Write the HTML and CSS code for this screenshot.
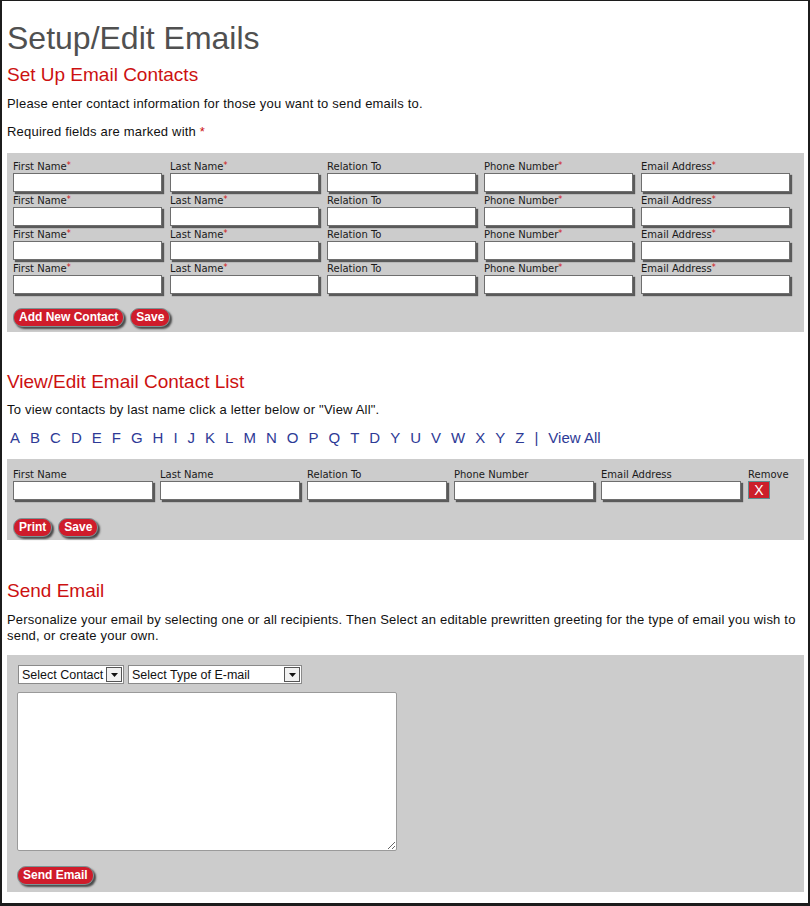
FILE: index.html
```html
<!DOCTYPE html>
<html lang="en">
<head>
<meta charset="utf-8">
<title>Setup/Edit Emails</title>
<link rel="stylesheet" href="styles.css">
</head>
<body>
<div class="page">
  <h1 class="title">Setup/Edit Emails</h1>

  <section class="section">
    <h2 class="heading">Set Up Email Contacts</h2>
    <p class="text">Please enter contact information for those you want to send emails to.</p>
    <p class="text note">Required fields are marked with <span class="req">*</span></p>
    <form class="panel panel-setup">
      <div class="contact-grid">
        <label class="field"><span class="field-label">First Name<span class="req-sm">*</span></span><input class="input" type="text"></label>
        <label class="field"><span class="field-label">Last Name<span class="req-sm">*</span></span><input class="input" type="text"></label>
        <label class="field"><span class="field-label">Relation To</span><input class="input" type="text"></label>
        <label class="field"><span class="field-label">Phone Number<span class="req-sm">*</span></span><input class="input" type="text"></label>
        <label class="field"><span class="field-label">Email Address<span class="req-sm">*</span></span><input class="input" type="text"></label>

        <label class="field"><span class="field-label">First Name<span class="req-sm">*</span></span><input class="input" type="text"></label>
        <label class="field"><span class="field-label">Last Name<span class="req-sm">*</span></span><input class="input" type="text"></label>
        <label class="field"><span class="field-label">Relation To</span><input class="input" type="text"></label>
        <label class="field"><span class="field-label">Phone Number<span class="req-sm">*</span></span><input class="input" type="text"></label>
        <label class="field"><span class="field-label">Email Address<span class="req-sm">*</span></span><input class="input" type="text"></label>

        <label class="field"><span class="field-label">First Name<span class="req-sm">*</span></span><input class="input" type="text"></label>
        <label class="field"><span class="field-label">Last Name<span class="req-sm">*</span></span><input class="input" type="text"></label>
        <label class="field"><span class="field-label">Relation To</span><input class="input" type="text"></label>
        <label class="field"><span class="field-label">Phone Number<span class="req-sm">*</span></span><input class="input" type="text"></label>
        <label class="field"><span class="field-label">Email Address<span class="req-sm">*</span></span><input class="input" type="text"></label>

        <label class="field"><span class="field-label">First Name<span class="req-sm">*</span></span><input class="input" type="text"></label>
        <label class="field"><span class="field-label">Last Name<span class="req-sm">*</span></span><input class="input" type="text"></label>
        <label class="field"><span class="field-label">Relation To</span><input class="input" type="text"></label>
        <label class="field"><span class="field-label">Phone Number<span class="req-sm">*</span></span><input class="input" type="text"></label>
        <label class="field"><span class="field-label">Email Address<span class="req-sm">*</span></span><input class="input" type="text"></label>
      </div>
      <div class="actions actions-setup">
        <button class="btn" type="button">Add New Contact</button>
        <button class="btn" type="button">Save</button>
      </div>
    </form>
  </section>

  <section class="section">
    <h2 class="heading heading-gap">View/Edit Email Contact List</h2>
    <p class="text text-list">To view contacts by last name click a letter below or "View All".</p>
    <nav class="alpha">
      <a href="#">A</a><a href="#">B</a><a href="#">C</a><a href="#">D</a><a href="#">E</a><a href="#">F</a><a href="#">G</a><a href="#">H</a><a href="#">I</a><a href="#">J</a><a href="#">K</a><a href="#">L</a><a href="#">M</a><a href="#">N</a><a href="#">O</a><a href="#">P</a><a href="#">Q</a><a href="#">T</a><a href="#">D</a><a href="#">Y</a><a href="#">U</a><a href="#">V</a><a href="#">W</a><a href="#">X</a><a href="#">Y</a><a href="#">Z</a><span class="sep">|</span><a href="#">View All</a>
    </nav>
    <form class="panel panel-list">
      <div class="list-grid">
        <label class="field"><span class="field-label">First Name</span><input class="input" type="text"></label>
        <label class="field"><span class="field-label">Last Name</span><input class="input" type="text"></label>
        <label class="field"><span class="field-label">Relation To</span><input class="input" type="text"></label>
        <label class="field"><span class="field-label">Phone Number</span><input class="input" type="text"></label>
        <label class="field"><span class="field-label">Email Address</span><input class="input" type="text"></label>
        <div class="field"><span class="field-label">Remove</span><button class="remove-btn" type="button">X</button></div>
      </div>
      <div class="actions actions-list">
        <button class="btn" type="button">Print</button>
        <button class="btn" type="button">Save</button>
      </div>
    </form>
  </section>

  <section class="section">
    <h2 class="heading heading-gap2">Send Email</h2>
    <p class="text text-send">Personalize your email by selecting one or all recipients. Then Select an editable prewritten greeting for the type of email you wish to send, or create your own.</p>
    <form class="panel panel-send">
      <div class="selects">
        <div class="select select-contact" role="combobox" aria-expanded="false">
          <span class="select-text">Select Contact</span>
          <span class="select-arrow"><svg width="7" height="4" viewBox="0 0 7 4"><path d="M0 0H7L3.5 4Z" fill="#111"/></svg></span>
        </div>
        <div class="select select-type" role="combobox" aria-expanded="false">
          <span class="select-text">Select Type of E-mail</span>
          <span class="select-arrow"><svg width="7" height="4" viewBox="0 0 7 4"><path d="M0 0H7L3.5 4Z" fill="#111"/></svg></span>
        </div>
      </div>
      <textarea class="message"></textarea>
      <div class="actions actions-send">
        <button class="btn" type="button">Send Email</button>
      </div>
    </form>
  </section>
</div>
</body>
</html>
```

FILE: styles.css
```css
* {
  box-sizing: border-box;
}

html,
body {
  margin: 0;
  padding: 0;
  background: #ffffff;
}

body {
  font-family: "Liberation Sans", Arial, sans-serif;
  color: #111111;
}

.page {
  height: 906px;
  border-style: solid;
  border-color: #1c1c1c;
  border-width: 1px 2px 3px 2px;
  padding: 0 4px 0 5px;
  overflow: hidden;
}

.title {
  font-size: 32px;
  line-height: 37px;
  font-weight: normal;
  color: #505050;
  margin: 19px 0 7px;
}

.heading {
  font-size: 19px;
  line-height: 22px;
  font-weight: normal;
  color: #cc1111;
  margin: 0 0 10px;
}

.heading-gap {
  margin-top: 39px;
  margin-bottom: 9px;
}

.heading-gap2 {
  margin-top: 40px;
}

.text {
  font-size: 13px;
  line-height: 16px;
  letter-spacing: 0.2px;
  margin: 0 0 12px;
}

.note {
  margin-bottom: 13px;
}

.text-list {
  margin-bottom: 11px;
}

.text-send {
  margin-bottom: 11px;
}

.req {
  color: #cc1111;
}

.panel {
  background: #cccccc;
  margin: 0;
}

/* Set up panel */
.panel-setup {
  padding: 8px 6px 5px;
}

.contact-grid {
  display: grid;
  grid-template-columns: repeat(5, 149px);
  column-gap: 8px;
  row-gap: 3px;
}

.field {
  display: flex;
  flex-direction: column;
  align-items: flex-start;
}

.field-label {
  font-family: "DejaVu Sans", Verdana, sans-serif;
  font-size: 10px;
  line-height: 12px;
  height: 12px;
  color: #1a1a1a;
  white-space: nowrap;
}

.req-sm {
  color: #d01010;
  font-size: 8px;
  line-height: 8px;
  vertical-align: top;
  position: relative;
  top: 1px;
}

.input {
  display: block;
  width: 100%;
  height: 19px;
  margin: 0;
  padding: 0 3px;
  border: 1px solid #6e6e6e;
  background: #ffffff;
  box-shadow: 2px 2px 1px #5a5a5a;
  font: 12px "Liberation Sans", Arial, sans-serif;
  outline: none;
}

.actions {
  display: flex;
  gap: 6px;
}

.actions-setup {
  margin-top: 14px;
}

.btn {
  height: 19px;
  margin: 0;
  padding: 0 5px;
  border: 1px solid #7b9596;
  border-radius: 9px;
  background: #cf1c2b;
  color: #ffffff;
  font: bold 12px/17px "Liberation Sans", Arial, sans-serif;
  box-shadow: 2px 2px 2px #4a4a4a;
  cursor: pointer;
}

/* Alphabet */
.alpha {
  display: flex;
  gap: 10px;
  padding-left: 3px;
  margin: 0 0 12px;
  font-size: 15px;
  line-height: 18px;
  color: #2d3a96;
}

.alpha a {
  color: #2d3a96;
  text-decoration: none;
}

/* List panel */
.panel-list {
  padding: 10px 6px 3px;
}

.list-grid {
  display: grid;
  grid-template-columns: repeat(5, 140px) auto;
  column-gap: 7px;
}

.remove-btn {
  width: 22px;
  height: 18px;
  margin: 0;
  padding: 0;
  border: 1px solid #5d8d8f;
  background: #cc1f2a;
  color: #ffffff;
  font: 14px/16px "Liberation Sans", Arial, sans-serif;
}

.actions-list {
  margin-top: 18px;
}

/* Send panel */
.panel-send {
  padding: 10px 10px 7px;
}

.selects {
  display: flex;
  gap: 4px;
  margin-left: 1px;
}

.select {
  display: flex;
  align-items: center;
  height: 19px;
  border: 1px solid #8a8a8a;
  background: #ffffff;
  padding-left: 3px;
  font-size: 12.5px;
  line-height: 16px;
  color: #111111;
}

.select-contact {
  width: 106px;
}

.select-type {
  width: 174px;
}

.select-text {
  flex: 1;
  white-space: nowrap;
  overflow: hidden;
}

.select-arrow {
  display: flex;
  align-items: center;
  justify-content: center;
  width: 16px;
  height: 15px;
  margin-right: 1px;
  border: 1px solid #555555;
  background: #f1f1f1;
}

.message {
  display: block;
  width: 380px;
  height: 159px;
  margin: 8px 0 0;
  border: 1px solid #9a9a9a;
  border-radius: 2px;
  background: #ffffff;
  resize: both;
  outline: none;
}

.actions-send {
  margin-top: 15px;
}
```
